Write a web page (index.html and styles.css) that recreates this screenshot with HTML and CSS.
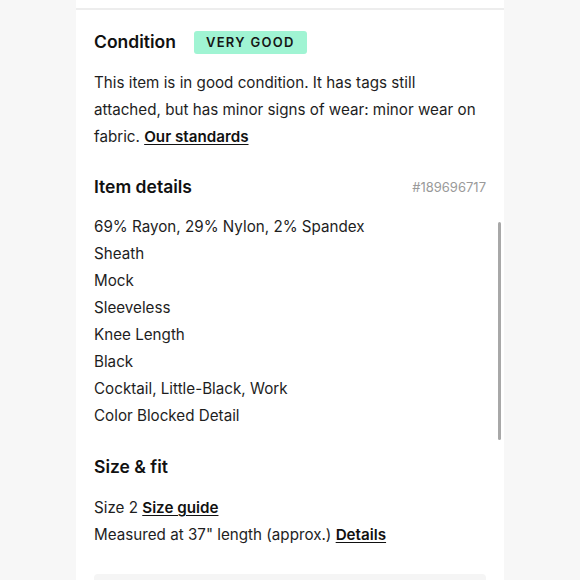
FILE: index.html
```html
<!DOCTYPE html>
<html lang="en">
<head>
<meta charset="utf-8">
<link rel="stylesheet" href="styles.css">
</head>
<body>
<main class="card">
  <hr class="divider">
  <section class="section">
    <div class="cond-row">
      <h2 class="heading">Condition</h2>
      <span class="badge">VERY GOOD</span>
    </div>
    <p class="text">This item is in good condition. It has tags still attached, but has minor signs of wear: minor wear on fabric. <a class="link" href="#">Our standards</a></p>
  </section>
  <section class="section">
    <div class="head-row">
      <h2 class="heading">Item details</h2>
      <span class="item-id">#189696717</span>
    </div>
    <ul class="list">
      <li>69% Rayon, 29% Nylon, 2% Spandex</li>
      <li>Sheath</li>
      <li>Mock</li>
      <li>Sleeveless</li>
      <li>Knee Length</li>
      <li>Black</li>
      <li>Cocktail, Little-Black, Work</li>
      <li>Color Blocked Detail</li>
    </ul>
  </section>
  <section class="section section-size">
    <h2 class="heading">Size &amp; fit</h2>
    <p class="text">Size 2 <a class="link" href="#">Size guide</a><br>Measured at 37" length (approx.) <a class="link" href="#">Details</a></p>
  </section>
  <div class="grey-box"></div>
  <div class="scrollbar"></div>
</main>
</body>
</html>
```
FILE: styles.css
```css
html, body {
  margin: 0;
  padding: 0;
}
body {
  background: #f7f7f7;
  font-family: Inter, "Noto Sans", sans-serif;
  color: #1e1e1e;
  height: 580px;
  overflow: hidden;
}
.card {
  position: relative;
  margin-left: 76px;
  width: 428px;
  height: 580px;
  background: #fff;
  padding: 8px 18px 0;
  box-sizing: border-box;
  display: flex;
  flex-direction: column;
  overflow: hidden;
}
.divider {
  margin: 0 -18px;
  border: 0;
  height: 2px;
  flex-shrink: 0;
  background: #ededed;
}
.section {
  display: flex;
  flex-direction: column;
  gap: 15px;
  margin-top: 20px;
}
.section + .section {
  margin-top: 25px;
}
.section + .section-size {
  margin-top: 26px;
}
.head-row + .list {
  margin-top: -1px;
}
.cond-row {
  display: flex;
  align-items: center;
  gap: 18px;
}
.head-row {
  display: flex;
  align-items: center;
  justify-content: space-between;
}
.heading {
  margin: 0;
  font-size: 17.5px;
  line-height: 24px;
  font-weight: 600;
  color: #111;
}
.badge {
  background: #a0f4d3;
  color: #161616;
  font-size: 13px;
  font-weight: 600;
  letter-spacing: 1.3px;
  height: 23px;
  line-height: 23px;
  padding: 0 12px;
  border-radius: 3px;
}
.item-id {
  font-size: 13px;
  color: #9a9a9a;
  line-height: 20px;
}
.text {
  margin: 0;
  font-size: 15.2px;
  line-height: 27px;
}
.link {
  color: #111;
  font-weight: 600;
  text-decoration: underline;
  text-underline-offset: 2px;
}
.list {
  margin: 0;
  padding: 0;
  list-style: none;
  font-size: 15.2px;
  line-height: 27px;
}
.grey-box {
  margin-top: 26px;
  height: 40px;
  flex-shrink: 0;
  background: #f5f5f5;
  border-radius: 4px;
}
.scrollbar {
  position: absolute;
  left: 422px;
  top: 222px;
  width: 3px;
  height: 218px;
  background: #a8a8a8;
  border-radius: 2px;
}
```
